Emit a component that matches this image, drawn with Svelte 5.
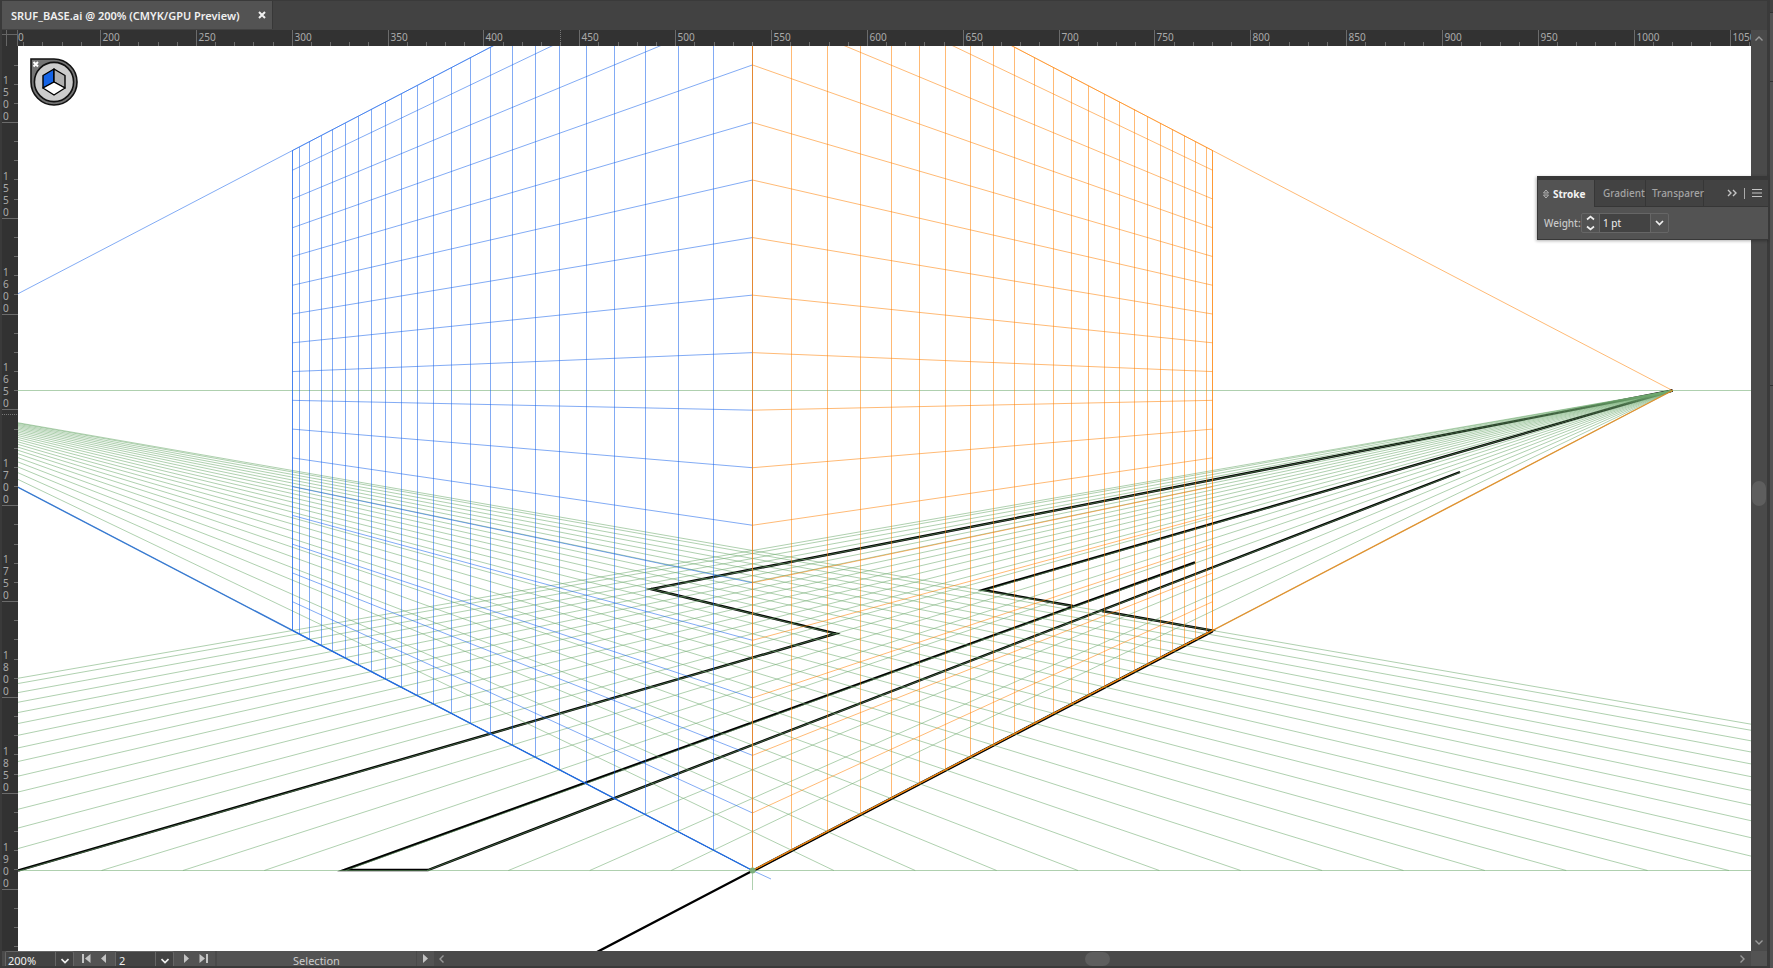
<script>
  const VP_R = 1672.5, VP_L = -167.5, CX = 752.5, HY = 390.5, GY = 870.5;
  const DEPTH = 22.61;
  const crisp = (v) => Math.floor(v) + 0.5;

  const steps = Array.from({ length: 22 }, (_, i) => i + 1);
  const columns = [...steps, DEPTH].map((k) => {
    const d = (920 * k) / (k + DEPTH);
    const h = 480 * (1 - d / 920);
    return { d, top: HY - h, bottom: HY + h };
  });
  const rows = Array.from({ length: 17 }, (_, k) => {
    const y = GY - 57.54 * k;
    return { near: y, far: (y + HY) / 2 };
  });
  const floor = [0, ...steps, DEPTH].map((k) => 81.37 * k);

  const planes = [
    { name: 'left', sign: -1, vp: VP_L, bias: -0.4 },
    { name: 'right', sign: 1, vp: VP_R, bias: 0.3 }
  ];

  const hTicks = [];
  for (let v = 160; v <= 1060; v += 10) {
    hTicks.push({ x: crisp(100.5 + (v - 200) * 1.9172 - 18), label: v % 50 === 0 ? v : null });
  }
  const vTicks = [];
  for (let v = 1460; v <= 1930; v += 10) {
    vTicks.push({ y: crisp(122.5 + (v - 1500) * 1.9165 - 46), label: v % 50 === 0 ? String(v) : null });
  }
</script>

<div class="frame">
<div class="app">
  <header class="tabs">
    <div class="doc-tab">
      <span>SRUF_BASE.ai @ 200% (CMYK/GPU Preview)</span>
      <button class="close" aria-label="Close document">
        <svg width="8" height="8" viewBox="0 0 8 8"><path d="M1 1L7 7M7 1L1 7" stroke="#f0f0f0" stroke-width="2" /></svg>
      </button>
    </div>
  </header>

  <div class="ruler-row">
    <svg class="origin" width="16" height="16" viewBox="0 0 16 16">
      <path d="M0 4.5H16M4.5 0V16M15.500 0V16" stroke="#666" />
    </svg>
    <svg class="hruler" height="16">
      <text x="0" y="11">0</text>
      {#each hTicks as t}
        <line x1={t.x} x2={t.x} y1={t.label ? 0 : 12} y2="16" stroke="#6b6b6b" />
        {#if t.label}<text x={t.x + 2} y="11">{t.label}</text>{/if}
      {/each}
      <path d="M542.5 0V16" stroke="#777" stroke-dasharray="1 1" />
    </svg>
  </div>

  <div class="work">
    <svg class="vruler" width="16">
      {#each vTicks as t}
        <line x1={t.label ? 0 : 12} x2="16" y1={t.y} y2={t.y} stroke="#6b6b6b" />
        {#if t.label}
          {#each t.label.split('') as c, i}<text x="1" y={t.y - 39 + i * 12}>{c}</text>{/each}
        {/if}
      {/each}
      <path d="M0 368.5H16" stroke="#777" stroke-dasharray="1 1" />
    </svg>

    <main class="canvas">
      <svg class="art" width="1733" height="905" viewBox="18 46 1733 905">
        <g fill="none" stroke="#000" stroke-width="2.4" stroke-miterlimit="12">
          <path d="M18 870.5L836 633.5L651 589L1672.5 390.5" />
          <path d="M1672.5 390.5L983 590L1073 606" />
          <path d="M1195 562.5L344 870L428 870L1460 472" />
          <path d="M1102 611L1212.5 630.5L597 952" />
        </g>
        <path d="M1212.5 631.5L752.5 871.5" stroke="#000" stroke-width="2" />
        <g class="floor">
          <path d="M18 {HY}H1751M18 {GY}H1751M{CX} {GY}V890" />
          {#each floor as f}
            <line x1={VP_L} y1={HY} x2={CX + f} y2={GY} />
            <line x1={VP_R} y1={HY} x2={CX - f} y2={GY} />
          {/each}
        </g>
        {#each planes as p}
          <g class="plane {p.name}">
            {#each columns as c}
              {@const x = CX + p.sign * Math.round(c.d + p.bias)}
              <line x1={x} x2={x} y1={c.top} y2={c.bottom} />
            {/each}
            {#each rows as r}
              <line x1={CX} y1={r.near} x2={CX + p.sign * 460} y2={r.far} />
            {/each}
            <line x1={CX} y1={HY - 480} x2={p.vp} y2={HY} />
            <line class="base" x1={CX} y1={GY} x2={p.vp} y2={HY} />
            <path d="M{CX} {HY - 480}L{CX + p.sign * 460} {HY - 240}V{HY + 240}L{CX} {GY}Z" />
          </g>
        {/each}
        <path class="plane right" d="M{CX} 46V{GY}" />
        <path class="plane left" d="M{CX} {GY}L771 879" />
        <circle cx={CX} cy={GY} r="3" fill="#7cb07c" />
      </svg>

      <button class="widget" aria-label="Plane switching widget">
        <svg width="48" height="48" viewBox="0 0 48 48">
          <path d="M1 1H24A23 23 0 1 1 1 24Z" fill="#747474" stroke="#111" stroke-width="1.6" />
          <circle cx="24" cy="24" r="19.6" fill="#ccc" stroke="#111" stroke-width="1.6" />
          <g stroke="#000" stroke-width="1.4" stroke-linejoin="round">
            <path d="M24 11L13 17.500V30L24 24Z" fill="#1463e6" />
            <path d="M24 11L35 17.500V30L24 24Z" fill="#b0b0b0" />
            <path d="M24 24L35 30L24 37L13 30Z" fill="#fff" />
          </g>
          <path d="M3.500 4L8 8.500M8 4L3.500 8.500" stroke="#fff" stroke-width="2" />
        </svg>
      </button>
    </main>

    <div class="vscroll">
      <svg width="8" height="5" viewBox="0 0 8 5"><path d="M.5 4.500L4 1L7.500 4.500" class="chev dim" /></svg>
      <div class="vthumb"></div>
      <svg width="8" height="5" viewBox="0 0 8 5"><path d="M.5 .5L4 4L7.500 .5" class="chev dim" /></svg>
    </div>

    <section class="panel" aria-label="Stroke">
      <div class="panel-tabs">
        <button class="ptab active">
          <svg width="6" height="10" viewBox="0 0 6 10"><path d="M.5 4L3 1L5.500 4ZM.5 6L3 9L5.500 6Z" fill="none" stroke="#b4b4b4" /></svg>
          Stroke
        </button>
        <button class="ptab">Gradient</button>
        <button class="ptab wide">Transparer</button>
        <div class="ptools">
          <button aria-label="Expand">
            <svg width="10" height="8" viewBox="0 0 10 8"><path d="M1 1L4 4L1 7M6 1L9 4L6 7" class="chev" /></svg>
          </button>
          <span class="sep"></span>
          <button aria-label="Panel menu">
            <svg width="10" height="8" viewBox="0 0 10 8"><path d="M0 .5H10M0 4H10M0 7.500H10" stroke="#c4c4c4" /></svg>
          </button>
        </div>
      </div>
      <div class="weight">
        <label for="weight">Weight:</label>
        <div class="field">
          <button class="spin" aria-label="Step weight">
            <svg width="9" height="16" viewBox="0 0 9 16"><path d="M1 4.500L4.500 1.500L8 4.500M1 11.500L4.500 14.500L8 11.500" class="chev bright" /></svg>
          </button>
          <input id="weight" value="1 pt" />
          <button class="drop" aria-label="Weight presets">
            <svg width="9" height="6" viewBox="0 0 9 6"><path d="M1 1L4.500 4.500L8 1" class="chev bright" /></svg>
          </button>
        </div>
      </div>
    </section>
  </div>

  <footer class="status">
    <div class="combo zoom">
      <input aria-label="Zoom" value="200%" />
      <button aria-label="Zoom levels"><svg width="8" height="6" viewBox="0 0 8 6"><path d="M.5 1L4 4.500L7.500 1" class="chev bright" /></svg></button>
    </div>
    <div class="nav">
      <button aria-label="First artboard"><svg width="9" height="9" viewBox="0 0 9 9"><path d="M0 0H2V9H0ZM8.500 0V9L3 4.500Z" fill="#c4c4c4" /></svg></button>
      <button aria-label="Previous artboard"><svg width="9" height="9" viewBox="0 0 9 9"><path d="M7 0V9L2 4.500Z" fill="#c4c4c4" /></svg></button>
    </div>
    <div class="combo page">
      <input aria-label="Artboard" value="2" />
      <button aria-label="Artboards"><svg width="8" height="6" viewBox="0 0 8 6"><path d="M.5 1L4 4.500L7.500 1" class="chev bright" /></svg></button>
    </div>
    <div class="nav">
      <button aria-label="Next artboard"><svg width="9" height="9" viewBox="0 0 9 9"><path d="M2 0V9L7 4.500Z" fill="#c4c4c4" /></svg></button>
      <button aria-label="Last artboard"><svg width="9" height="9" viewBox="0 0 9 9"><path d="M7 0H9V9H7ZM.5 0V9L6 4.500Z" fill="#c4c4c4" /></svg></button>
    </div>
    <div class="tool">Selection</div>
    <button class="more" aria-label="Status options"><svg width="9" height="9" viewBox="0 0 9 9"><path d="M2 0V9L7 4.500Z" fill="#c4c4c4" /></svg></button>
    <div class="hscroll">
      <svg width="5" height="8" viewBox="0 0 5 8"><path d="M4.500 .5L1 4L4.500 7.500" class="chev dim" /></svg>
      <div class="hthumb"></div>
      <svg width="5" height="8" viewBox="0 0 5 8"><path d="M.5 .5L4 4L.5 7.500" class="chev dim" /></svg>
    </div>
    <div class="corner"></div>
  </footer>
</div>
<aside class="dock"><i class="cap"></i><i class="tools"></i><i class="group"></i><i class="rest"></i></aside>
</div>

<style>
  :global(body) { margin: 0; background: #535353; }
  .frame { display: flex; height: 100vh; overflow: hidden; }
  .app {
    box-sizing: border-box;
    display: flex;
    flex: 1;
    min-width: 0;
    flex-direction: column;
    padding: 1px 3px 2px 2px;
    background: #3a3a3a;
    font-family: "Noto Sans", "Open Sans", sans-serif;
    font-size: 11px;
    color: #ddd;
  }
  svg { display: block; }
  button { padding: 0; border: 0; background: none; color: inherit; font: inherit; display: flex; align-items: center; justify-content: center; }
  input { box-sizing: border-box; min-width: 0; padding: 0; border: 0; background: #434343; color: #f0f0f0; font: inherit; outline: 0; }
  .chev { fill: none; stroke: #c4c4c4; stroke-width: 1.4; }
  .chev.dim { stroke: #999; }
  .chev.bright { stroke: #f0f0f0; stroke-width: 1.7; }

  .tabs { display: flex; height: 29px; background: #424242; }
  .doc-tab { box-sizing: border-box; display: flex; align-items: center; justify-content: space-between; width: 271px; height: 28px; padding: 0 6px 0 9px; background: #535353; border-right: 1px solid #383838; font-weight: 600; color: #f0f0f0; white-space: nowrap; }

  .ruler-row { display: flex; height: 16px; padding-right: 16px; background: #323232; }
  .hruler { flex: 1; min-width: 0; overflow: hidden; }
  .hruler text, .vruler text { fill: #aaa; font: 10px "Noto Sans", sans-serif; }
  .work { position: relative; display: flex; flex: 1; min-height: 0; }
  .vruler { height: 100%; background: #323232; overflow: hidden; flex: none; }
  .canvas { position: relative; flex: 1; min-width: 0; background: #fff; overflow: hidden; }
  .floor { fill: none; stroke: rgba(112, 172, 112, 0.56); }
  .plane { fill: none; }
  .plane.left { stroke: rgba(24, 100, 235, 0.54); }
  .plane.right { stroke: rgba(255, 128, 0, 0.54); }
  .plane.left .base { stroke: rgba(32, 104, 215, 0.85); stroke-width: 1.4; }
  .plane.right .base { stroke: rgba(232, 134, 24, 0.85); stroke-width: 1.4; }
  .widget { position: absolute; left: 12px; top: 12px; }

  .vscroll { box-sizing: border-box; display: flex; flex-direction: column; align-items: center; justify-content: space-between; width: 16px; margin-top: -16px; padding: 6px 0; background: #4a4a4a; }
  .vthumb { width: 14px; height: 25px; margin-top: 6px; border-radius: 7px; background: #5e5e5e; }

  .panel { position: absolute; right: -2px; top: 130px; box-sizing: border-box; width: 232px; background: #535353; border: 1px solid #383838; border-top: 4px solid #383838; box-shadow: -1px 1px 3px rgba(0, 0, 0, 0.3); font-size: 10px; }
  .panel-tabs { display: flex; height: 27px; background: #424242; }
  .ptab { box-sizing: border-box; justify-content: flex-start; width: 51px; padding-left: 8px; border-right: 1px solid #363636; border-bottom: 1px solid #363636; color: #a4a4a4; font-weight: 500; white-space: nowrap; }
  .ptab.wide { width: 58px; padding-left: 6px; }
  .ptab.active { gap: 4px; width: 57px; padding-left: 5px; background: #535353; border-bottom: 0; color: #f4f4f4; font-weight: 700; }
  .ptools { display: flex; flex: 1; align-items: center; justify-content: flex-end; gap: 7px; padding-right: 6px; border-bottom: 1px solid #363636; }
  .sep { width: 1px; height: 11px; background: #aaa; }
  .weight { display: flex; align-items: center; height: 32px; padding: 0 6px; font-weight: 500; color: #c8c8c8; }
  .weight label { width: 37px; white-space: nowrap; }
  .field { display: flex; box-sizing: border-box; width: 88px; height: 20px; border: 1px solid #666; border-radius: 2px; }
  .field .spin, .field .drop { width: 17px; }
  .field input { flex: 1; padding-left: 3px; border: solid #666; border-width: 0 1px; font-weight: 400; }

  .status { display: flex; height: 15px; background: #4a4a4a; }
  .combo { display: flex; box-sizing: border-box; border: 1px solid #666; border-bottom: 0; border-radius: 2px 2px 0 0; background: #434343; }
  .combo input { flex: 1; padding: 3px 0 0 3px; border-right: 1px solid #666; height: 100%; }
  .combo button { width: 17px; padding-top: 4px; }
  .zoom { width: 69px; margin-left: 3px; }
  .zoom input { padding-left: 2px; }
  .page { width: 59px; }
  .nav { display: flex; justify-content: center; gap: 8px; width: 41px; background: #535353; padding-bottom: 1px; }
  .tool { box-sizing: border-box; width: 199px; margin-left: 2px; padding-top: 3px; background: #535353; color: #ccc; line-height: 14px; text-align: center; }
  .more { width: 17px; margin-left: 1px; background: #535353; }
  .hscroll { display: flex; flex: 1; align-items: center; justify-content: space-between; padding: 0 6px 0 5px; }
  .hthumb { width: 25px; height: 14px; margin-left: 10px; border-radius: 7px; background: #5e5e5e; }
  .corner { width: 16px; background: #535353; }

  .dock { display: flex; flex-direction: column; gap: 1px; width: 3px; background: #323232; }
  .dock i { background: #535353; }
  .dock .cap { height: 12px; background: #424242; }
  .dock .tools { height: 68px; }
  .dock .group { height: 303px; }
  .dock .rest { flex: 1; }
</style>
